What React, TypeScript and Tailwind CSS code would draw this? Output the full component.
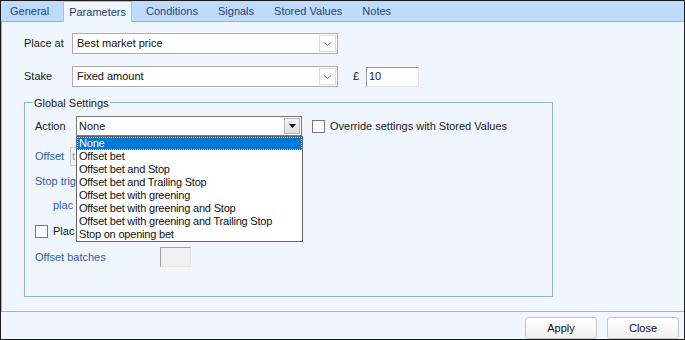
import React from "react";

const tabs = ["General", "Parameters", "Conditions", "Signals", "Stored Values", "Notes"];

const actions = [
  "None",
  "Offset bet",
  "Offset bet and Stop",
  "Offset bet and Trailing Stop",
  "Offset bet with greening",
  "Offset bet with greening and Stop",
  "Offset bet with greening and Trailing Stop",
  "Stop on opening bet",
];

const Chevron = () => (
  <svg width="9" height="6" viewBox="0 0 9 6" fill="none">
    <path d="M1 1.5 L4.5 4.5 L8 1.5" stroke="#6d6d6d" strokeWidth="1" />
  </svg>
);

const FlatCombo = ({ value }: { value: string }) => (
  <div className="flex h-[21px] w-[266px] items-center justify-between border border-[#adadad] bg-white pl-[4px] pr-[1px]">
    <span className="text-[#111]">{value}</span>
    <div className="flex h-[17px] w-[17px] items-center justify-center border border-[#dcdcdc] bg-white">
      <Chevron />
    </div>
  </div>
);

const CheckBox = () => <div className="h-[13px] w-[13px] shrink-0 border border-[#7a7a7a] bg-white" />;

export default function App() {
  return (
    <div className="flex h-[340px] w-[685px] flex-col border border-[#1b1b1b] bg-[#eff6fe] font-['Liberation_Sans',Arial,sans-serif] text-[11px] text-[#1a1a1a]">
      {/* tab strip */}
      <div className="flex h-[21px] items-end border-b border-[#94b1d8] bg-[#bfdbfb]">
        {tabs.map((t) =>
          t === "Parameters" ? (
            <div
              key={t}
              className="mx-[4px] -mb-[1px] flex h-[21px] items-center border border-b-0 border-[#a9c2e2] bg-[#eff6fe] px-[5px] text-[#1e3a66]"
            >
              {t}
            </div>
          ) : (
            <div key={t} className="flex h-[20px] items-center px-[10px] text-[#23447a] first:pl-[9px]">
              {t}
            </div>
          )
        )}
      </div>

      {/* page */}
      <div className="h-[290px] border-b border-l border-[#98b0d4] pl-[22px] pt-[11px]">
        <div className="flex h-[21px] items-center">
          <span className="w-[48px]">Place at</span>
          <FlatCombo value="Best market price" />
        </div>
        <div className="mt-[12px] flex h-[21px] items-center">
          <span className="w-[48px]">Stake</span>
          <FlatCombo value="Fixed amount" />
          <span className="ml-[15px] w-[13px]">£</span>
          <div className="flex h-[20px] w-[53px] items-center border border-b-[#e3e3e3] border-l-[#9a9a9a] border-r-[#e3e3e3] border-t-[#9a9a9a] bg-white pl-[2px]">
            10
          </div>
        </div>

        {/* group box */}
        <div className="relative mt-[15px] h-[195px] w-[529px] border border-[#8fb0d9] pl-[10px] pt-[13px]">
          <span className="absolute -top-[8px] left-[8px] bg-[#eff6fe] px-[1px] text-[#222]">Global Settings</span>

          <div className="flex h-[20px] items-center">
            <span className="w-[41px]">Action</span>
            <div className="relative">
              <div className="flex h-[20px] w-[226px] items-center justify-between border border-[#7a7a7a] bg-white pl-[2px] pr-[1px]">
                <span>None</span>
                <div className="flex h-[16px] w-[16px] items-center justify-center border border-[#b5b5b5] bg-gradient-to-b from-[#f4f4f4] to-[#dedede]">
                  <svg width="7" height="4" viewBox="0 0 7 4">
                    <path d="M0 0 H7 L3.5 4 Z" fill="#111" />
                  </svg>
                </div>
              </div>
              {/* open list */}
              <div className="absolute left-0 top-full z-10 w-[227px] border border-[#646464] bg-white text-[11px] tracking-[-0.2px]">
                {actions.map((a, i) => (
                  <div
                    key={a}
                    className={
                      i === 0
                        ? "h-[13px] border border-dotted border-[#e9c47a] bg-[#0078d7] pl-[1px] leading-[11px] text-white"
                        : "h-[13px] pl-[2px] leading-[13px] text-[#111]"
                    }
                  >
                    {a}
                  </div>
                ))}
              </div>
            </div>
            <div className="ml-[10px] flex items-center">
              <CheckBox />
              <span className="ml-[5px]">Override settings with Stored Values</span>
            </div>
          </div>

          {/* rows partly hidden behind the open list: only the visible part is shown */}
          <div className="mt-[11px] flex h-[19px] w-[41px] items-center whitespace-nowrap text-[#2f5da8]">
            <span className="w-[35px] shrink-0">Offset</span>
            <div className="flex h-[19px] w-[6px] shrink-0 items-center border border-r-0 border-[#c8c8c8] bg-[#f2f2f2] pl-[1px] text-[#9a9a9a]">
              t
            </div>
          </div>
          <div className="mt-[6px] flex h-[19px] w-[41px] items-center whitespace-nowrap text-[#2f5da8]">Stop trig</div>
          <div className="mt-[5px] flex h-[19px] w-[41px] items-center whitespace-nowrap pl-[18px] text-[#2f5da8]">plac</div>
          <div className="mt-[7px] flex h-[19px] w-[41px] items-center whitespace-nowrap">
            <CheckBox />
            <span className="ml-[5px]">Plac</span>
          </div>
          <div className="mt-[6px] flex h-[20px] items-center text-[#2f5da8]">
            <span className="w-[125px]">Offset batches</span>
            <div className="h-[20px] w-[31px] border border-b-[#e6e6e6] border-l-[#a0a0a0] border-r-[#e6e6e6] border-t-[#a0a0a0] bg-[#f0f0f0]" />
          </div>
        </div>
      </div>

      {/* footer */}
      <div className="flex flex-1 items-end justify-end gap-[10px] pr-[5px]">
        <button className="h-[22px] w-[72px] rounded-[3px] border border-[#c4c4c4] bg-gradient-to-b from-white to-[#f1f1f1] text-[11px] text-[#111]">
          Apply
        </button>
        <button className="h-[22px] w-[72px] rounded-[3px] border border-[#c4c4c4] bg-gradient-to-b from-white to-[#f1f1f1] text-[11px] text-[#111]">
          Close
        </button>
      </div>
    </div>
  );
}
